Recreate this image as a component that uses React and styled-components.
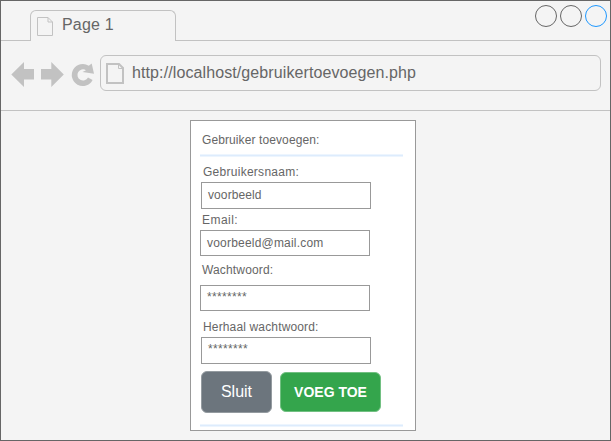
import React from "react";
import styled, { createGlobalStyle } from "styled-components";

const GlobalStyle = createGlobalStyle`
  *, *::before, *::after { box-sizing: border-box; }
  body { margin: 0; font-family: "Liberation Sans", Arial, sans-serif; color: #666; }
`;

const Window = styled.div`
  width: 611px;
  height: 441px;
  display: flex;
  flex-direction: column;
  background: #f4f4f4;
  border: 1px solid #666;
  overflow: hidden;
`;

const TabBar = styled.header`
  height: 40px;
  display: flex;
  align-items: flex-end;
  flex: none;
`;

const TabLine = styled.div`
  width: ${(p) => p.$width || "auto"};
  flex: ${(p) => (p.$width ? "none" : 1)};
  height: 40px;
  display: flex;
  justify-content: flex-end;
  gap: 3px;
  padding: 4px 3px 0 0;
  border-bottom: 1px solid #c2c2c2;
`;

const Tab = styled.div`
  width: 146px;
  height: 31px;
  display: flex;
  padding: 6px 0 0 6px;
  gap: 9px;
  border: 1px solid #c2c2c2;
  border-bottom: none;
  border-radius: 6px 6px 0 0;
`;

const Text = styled.span`
  font-size: ${(p) => p.$size || 12}px;
  line-height: ${(p) => p.$line || 14}px;
  letter-spacing: ${(p) => p.$spacing || 0}px;
  margin: ${(p) => p.$margin || 0};
  white-space: nowrap;
`;

const WindowButton = styled.span`
  width: 22px;
  height: 22px;
  flex: none;
  border: 1px solid ${(p) => p.$color || "#666"};
  border-radius: 50%;
`;

const Toolbar = styled.nav`
  height: 70px;
  flex: none;
  display: flex;
  padding: 14px 9px 0 9px;
  border-bottom: 1px solid #c2c2c2;
`;

const NavIcons = styled.svg`
  width: 90px;
  height: 36px;
  flex: none;
  fill: #c2c2c2;
`;

const AddressBar = styled.div`
  width: 502px;
  height: 36px;
  display: flex;
  padding: 7px 0 0 5px;
  gap: 7px;
  border: 1px solid #c2c2c2;
  border-radius: 6px;
`;

const PageIcon = styled.svg`
  width: ${(p) => p.$w}px;
  height: ${(p) => p.$h}px;
  flex: none;
  fill: none;
  stroke: #c2c2c2;
`;

const Viewport = styled.main`
  flex: 1;
  padding: 9px 0 0 189px;
`;

const Panel = styled.section`
  width: 226px;
  height: 311px;
  display: flex;
  flex-direction: column;
  align-items: flex-start;
  padding: 12px 0 0 9px;
  background: #fff;
  border: 1px solid #999;
`;

const Divider = styled.div`
  width: 203px;
  height: 3px;
  flex: none;
  margin: ${(p) => p.$margin};
  background: #ddecfd;
  border: solid #edf5fe;
  border-width: 1px 0;
`;

const Field = styled.div`
  width: 170px;
  height: ${(p) => p.$height || 26}px;
  flex: none;
  margin: ${(p) => p.$margin};
  padding: ${(p) => p.$pad || "5px 0 0 6px"};
  display: flex;
  border: 1px solid #999;
`;

const Actions = styled.div`
  display: flex;
  align-items: center;
  gap: 8px;
  margin: 7px 0 0 1px;
`;

const Button = styled.button`
  width: ${(p) => p.$width}px;
  height: ${(p) => p.$height}px;
  display: flex;
  align-items: center;
  justify-content: center;
  padding: 0;
  border: 1px solid ${(p) => p.$edge};
  border-radius: 6px;
  background: ${(p) => p.$fill};
  color: #fff;
  font-family: inherit;
  font-weight: ${(p) => p.$weight || 400};
`;

export default function App() {
  return (
    <>
      <GlobalStyle />
      <Window>
        <TabBar>
          <TabLine $width="29px" />
          <Tab>
            <PageIcon $w={16} $h={19} viewBox="0 0 16 19">
              <path d="M.5.5H11L15.5 5V18.5H.5ZM11 .5V5H15.5" />
            </PageIcon>
            <Text $size={16} $line={18} $spacing={0.2} $margin="-1px 0 0">Page 1</Text>
          </Tab>
          <TabLine>
            <WindowButton />
            <WindowButton />
            <WindowButton $color="#1e98ff" />
          </TabLine>
        </TabBar>
        <Toolbar>
          <NavIcons viewBox="10 55 90 36">
            <path d="M11.3 74.5 24 62V69H34V79.5H24V87Z" />
            <path d="M63.8 74.5 51.3 62V69H41V79.5H51.3V87Z" />
            <path d="M91.7 63.5 94 73.8 82.5 72 86 70.2A5.6 5.6 0 1 0 88 77.6L92.6 80A11 11 0 1 1 88.8 65.8Z" />
          </NavIcons>
          <AddressBar>
            <PageIcon $w={18} $h={21} viewBox="0 0 18 21">
              <path strokeWidth="2" d="M1 1H13L17 5V20H1Z" />
              <path d="M12.5 1V5.5H17" />
            </PageIcon>
            <Text $size={16} $line={18} $spacing={0.1} $margin="1px 0 0 1px">http://localhost/gebruikertoevoegen.php</Text>
          </AddressBar>
        </Toolbar>
        <Viewport>
          <Panel>
            <Text $margin="0 0 0 2px" $spacing={0.1}>Gebruiker toevoegen:</Text>
            <Divider $margin="7px 0 0" />
            <Text $margin="8px 0 0 3px" $spacing={0.27}>Gebruikersnaam:</Text>
            <Field $height={27} $margin="3px 0 0 1px"><Text $spacing={0.1}>voorbeeld</Text></Field>
            <Text $margin="4px 0 0 2px" $spacing={0.45}>Email:</Text>
            <Field $margin="3px 0 0"><Text $spacing={0.2}>voorbeeld@mail.com</Text></Field>
            <Text $margin="7px 0 0 2px" $spacing={0.15}>Wachtwoord:</Text>
            <Field $margin="8px 0 0" $pad="4px 0 0 6px"><Text $spacing={0.33}>********</Text></Field>
            <Text $margin="9px 0 0 3px" $spacing={0.15}>Herhaal wachtwoord:</Text>
            <Field $height={27} $margin="3px 0 0 1px" $pad="4px 0 0 6px"><Text $spacing={0.33}>********</Text></Field>
            <Actions>
              <Button $width={71} $height={42} $fill="#6c757d" $edge="#949ba0">
                <Text $size={16} $line={18}>Sluit</Text>
              </Button>
              <Button $width={101} $height={40} $fill="#34a54c" $edge="#72c082" $weight={700}>
                <Text $size={14}>VOEG TOE</Text>
              </Button>
            </Actions>
            <Divider $margin="11px 0 0" />
          </Panel>
        </Viewport>
      </Window>
    </>
  );
}
